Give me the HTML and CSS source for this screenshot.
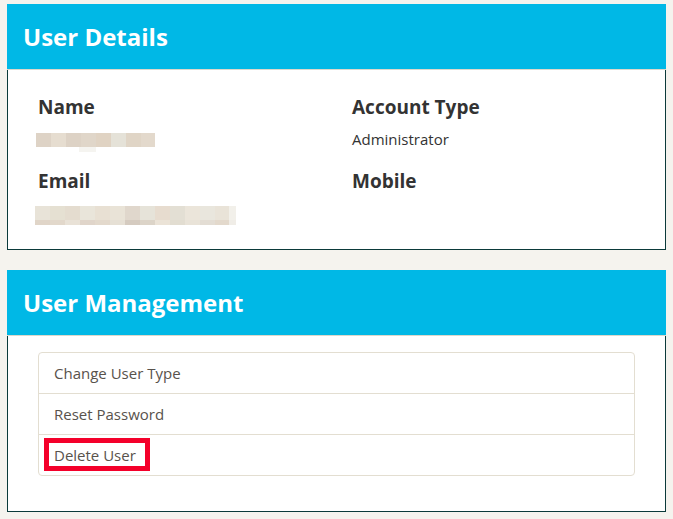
FILE: index.html
```html
<!DOCTYPE html>
<html>
<head>
<meta charset="utf-8">
<link rel="stylesheet" href="styles.css">
</head>
<body>
<section class="panel">
  <div class="panel-heading"><h2 class="panel-title">User Details</h2></div>
  <div class="panel-body details">
    <div class="field">
      <div class="label">Name</div>
      <div class="blur blur-name"></div>
    </div>
    <div class="field">
      <div class="label">Account Type</div>
      <div class="value">Administrator</div>
    </div>
    <div class="field">
      <div class="label">Email</div>
      <div class="blur blur-email"></div>
    </div>
    <div class="field">
      <div class="label">Mobile</div>
      <div class="value"></div>
    </div>
  </div>
</section>
<section class="panel">
  <div class="panel-heading"><h2 class="panel-title">User Management</h2></div>
  <div class="panel-body manage">
    <ul class="list-group">
      <li class="list-item">Change User Type</li>
      <li class="list-item">Reset Password</li>
      <li class="list-item"><span class="flagged">Delete User</span></li>
    </ul>
  </div>
</section>
</body>
</html>
```
FILE: styles.css
```css
html, body {
  margin: 0;
  padding: 0;
}
body {
  background: #f5f3ee;
  padding: 4px 7px 0 7px;
  font-family: "Open Sans", "DejaVu Sans", sans-serif;
  color: #333;
}
.panel {
  width: 659px;
  margin-bottom: 20px;
  background: #fff;
}
.panel-heading {
  background: #00b8e6;
  height: 65px;
  border-bottom: 1px solid #dcd8cc;
  display: flex;
  align-items: center;
  padding-left: 16px;
}
.panel-title {
  margin: 0;
  color: #fff;
  font-size: 24px;
  font-weight: 700;
  letter-spacing: 0;
  line-height: 30px;
  padding-top: 1px;
}
.panel-body {
  border: 1px solid #0b3a3a;
  border-top: none;
}
.details {
  display: grid;
  grid-template-columns: 314px 314px;
  padding: 23px 15px 0 15px;
  height: 156px;
  align-content: start;
  row-gap: 0;
}
.field {
  padding: 0 15px;
  height: 74px;
}
.label {
  font-size: 19px;
  font-weight: 700;
  line-height: 28px;
  color: #333;
}
.value {
  font-size: 15px;
  line-height: 20px;
  margin-top: 8px;
  color: #333;
}
.blur {
  margin-top: 12px;
}
.blur-name {
  margin-left: -2px;
  width: 119px;
  height: 19px;
  background:
    linear-gradient(90deg, transparent 0 43px, #f5f4f0 43px 60px, transparent 60px) 0 14px / 100% 5px no-repeat,
    linear-gradient(90deg,
      #ded3c6 0 15px, #e6ddd0 15px 30px, #ddd2c5 30px 45px, #e0d6c9 45px 60px,
      #e0d3c3 60px 75px, #e5e2d8 75px 90px, #e0d5c6 90px 105px, #e3d9cc 105px 119px) 0 0 / 100% 14px no-repeat;
}
.blur-email {
  margin-left: -3px;
  margin-top: 11px;
  width: 201px;
  height: 19px;
  background:
    linear-gradient(90deg,
      #e8e3d8 0 15px, #e5e0d2 15px 30px, #e4dccf 30px 45px, #e9e5da 45px 60px,
      #e8e0d3 60px 75px, #e9e3d7 75px 90px, #e0d7cc 90px 105px, #e6e3d9 105px 120px,
      #e7dccf 120px 135px, #e3dfd4 135px 150px, #ebe5da 150px 165px, #e9e6dd 165px 180px,
      #e9e3d8 180px 194px, #f2f0ea 194px 201px) 0 0 / 100% 14px no-repeat,
    linear-gradient(90deg,
      #e0d5c8 0 15px, #e2d8cb 15px 30px, #e9e2d7 30px 45px, #e0d5ca 45px 60px,
      #e3d9cc 60px 75px, #e6e0d5 75px 90px, #d5cbc0 90px 105px, #dcd4c8 105px 120px,
      #ebe3d7 120px 135px, #e2ddd1 135px 150px, #e9e3d8 150px 165px, #e3ddd4 165px 180px,
      #e3d9cc 180px 194px, #f0ede7 194px 201px) 0 14px / 100% 5px no-repeat;
}
.manage {
  padding: 16px 30px 35px 30px;
}
.list-group {
  list-style: none;
  margin: 0;
  padding: 0;
  border: 1px solid #e3ded1;
  border-radius: 4px;
}
.list-item {
  padding: 10px 15px;
  height: 20px;
  line-height: 20px;
  font-size: 15px;
  color: #58524c;
  border-top: 1px solid #e3ded1;
}
.list-item:first-child {
  border-top: none;
}
.flagged {
  position: relative;
}
.flagged::after {
  content: "";
  position: absolute;
  left: -10px;
  top: -7px;
  width: 96px;
  height: 23px;
  border: 5px solid #f4002a;
}
```
